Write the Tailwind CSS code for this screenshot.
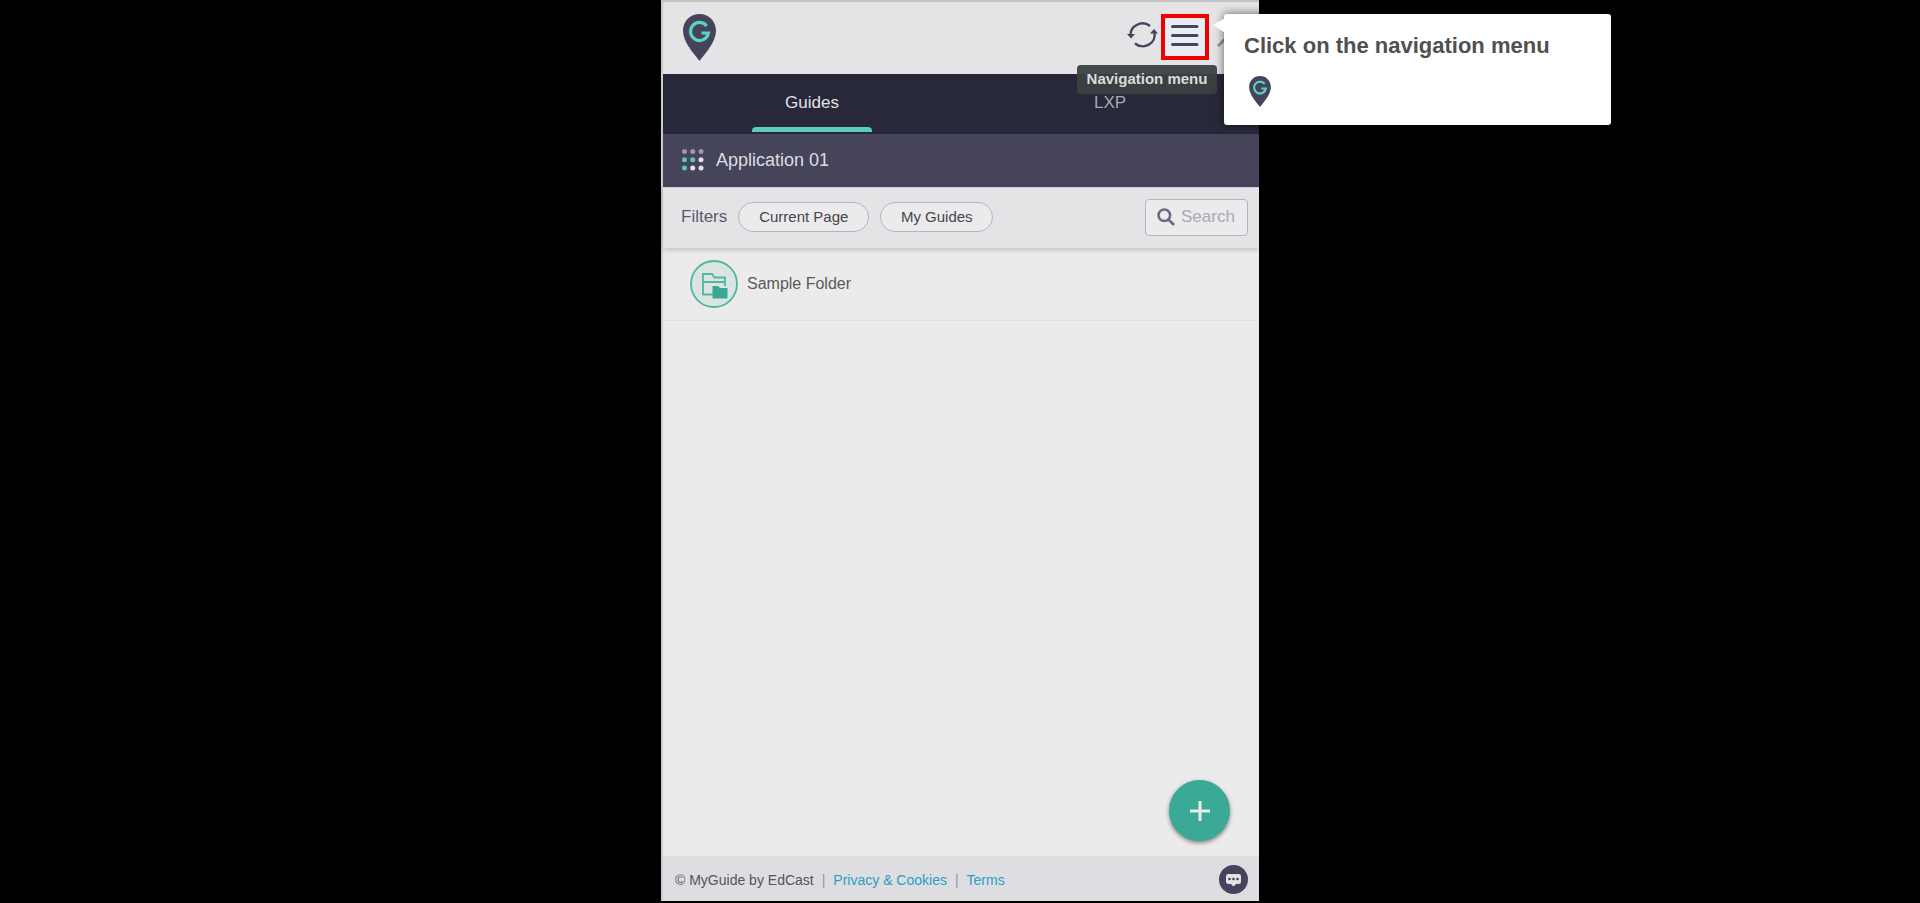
<!DOCTYPE html>
<html lang="en">
<head>
  <meta charset="UTF-8" />
  <meta name="viewport" content="width=device-width, initial-scale=1" />
  <title>MyGuide</title>
  <script src="https://cdn.jsdelivr.net/npm/@tailwindcss/browser@4"></script>
</head>
<body class="bg-black font-['Liberation_Sans',Arial,sans-serif]">

  <!-- Shared logo mark -->
  <svg class="hidden" aria-hidden="true">
    <symbol id="pin" viewBox="0 0 33 47">
      <path d="M16.500 0C7.200 0 0 7.300 0 16.600C0 27.500 9.600 38.400 16.500 47C23.400 38.400 33 27.500 33 16.600C33 7.300 25.800 0 16.500 0Z" fill="#45445c" />
      <path d="M23.600 11.900A9 9 0 1 0 25.400 19H18.500" fill="none" stroke="#5cd3bd" stroke-width="3.200" />
    </symbol>
  </svg>

  <div class="flex min-h-screen flex-col pb-0.5">
    <main class="mx-auto flex w-full max-w-[598px] grow flex-col border-l-2 border-[#cbcbcd] bg-[#ebebeb]">

      <!-- Header -->
      <header class="flex h-[74px] items-center bg-[#e4e4e6] pr-4 pl-5 shadow-[inset_0_2px_1px_#c2c2c4]">
        <svg class="h-[47px] w-[33px]" role="img" aria-label="MyGuide"><use href="#pin" /></svg>

        <div class="ml-auto flex items-center">
          <button type="button" aria-label="Refresh" class="mr-[3px]">
            <svg class="h-[30px] w-[31px]" viewBox="0 0 31 30" fill="none" stroke="#45445c" stroke-width="2.400">
              <path d="M3.500 13.500A12 11.500 0 0 1 23 4" />
              <path d="M27.500 10.500A12 11.500 0 0 1 8 21.500" />
              <path d="M0 12H8L4 16.500Z M23 11.500H31L27 7Z" fill="#45445c" stroke="none" />
            </svg>
          </button>

          <div class="relative">
            <button type="button" aria-label="Navigation menu" class="flex h-[46px] w-12 items-center justify-center border-4 border-[#ee0000] bg-[#e9edf1]">
              <svg class="h-6 w-7" viewBox="0 0 28 24" stroke="#45445c" stroke-width="3" stroke-linecap="round">
                <path d="M1.500 1.500H26M1.500 10.500H26M1.500 19.500H26" />
              </svg>
            </button>

            <!-- Hover tooltip -->
            <div role="tooltip" class="absolute top-[51px] right-[-8px] flex h-[29px] w-[140px] items-center justify-center rounded bg-[#3c4042]/95 text-[15px] font-bold whitespace-nowrap text-[#dcdcdc]">Navigation menu</div>

            <!-- Guide step balloon -->
            <section class="absolute top-0 left-[63px] z-10 h-[111px] w-[387px] rounded-[3px] bg-white px-5 pt-4 shadow-[0_0_10px_rgba(0,0,0,0.6)]">
              <svg class="absolute top-1 -left-[11px] h-[15px] w-3" viewBox="0 0 12 15"><path d="M12 0L0 7L12 15Z" fill="#fff" /></svg>
              <h1 class="text-[22px] leading-8 font-bold whitespace-nowrap text-[#505050]">Click on the navigation menu</h1>
              <svg class="mt-[14px] ml-[5px] h-[31px] w-[22px]" aria-hidden="true"><use href="#pin" /></svg>
            </section>
          </div>

          <button type="button" aria-label="Close" class="ml-2">
            <svg class="size-[26px]" viewBox="0 0 26 26" stroke="#8f8f93" stroke-width="2.500"><path d="M1 22L22 1M1 1L22 22" /></svg>
          </button>
        </div>
      </header>

      <!-- Tabs -->
      <nav class="grid h-15 grid-cols-2 bg-[#272839] text-[17px]">
        <button type="button" class="flex flex-col items-center text-[#e2e2e4]">
          <span class="flex h-[53px] items-center pt-1">Guides</span>
          <span class="h-[5px] w-[120px] rounded-t bg-[#5ccdb9]"></span>
        </button>
        <button type="button" class="flex flex-col items-center text-[#a9a9b1]">
          <span class="flex h-[53px] items-center pt-1">LXP</span>
        </button>
      </nav>

      <!-- Current application -->
      <div class="flex h-[53px] items-center gap-3 bg-[#45445b] px-[19px] pb-0.5">
        <svg class="size-[22px]" viewBox="0 0 22 22" aria-hidden="true">
          <g fill="#9a99aa"><circle cx="2.500" cy="2.500" r="2.500" /><circle cx="10.700" cy="2.500" r="2.500" /><circle cx="19" cy="2.500" r="2.500" /></g>
          <g fill="#5cc9b6"><circle cx="2.500" cy="10.700" r="2.500" /><circle cx="10.700" cy="10.700" r="2.500" /><circle cx="2.500" cy="19" r="2.500" /></g>
          <g fill="#e2e2e6"><circle cx="19" cy="10.700" r="2.500" /><circle cx="10.700" cy="19" r="2.500" /><circle cx="19" cy="19" r="2.500" /></g>
        </svg>
        <h2 class="text-lg text-[#dddde2]">Application 01</h2>
      </div>

      <!-- Filters -->
      <div class="relative flex h-[61px] items-center gap-[11px] border-t border-[#cfcfda] bg-[#e4e4e7] pr-[11px] pb-0.5 pl-[18px] shadow-[0_2px_5px_rgba(0,0,0,0.18)]">
        <span class="text-[17px] text-[#5b5a70]">Filters</span>
        <button type="button" class="h-[30px] w-[131px] rounded-full border border-[#b5b3c6] bg-[#ebebeb] text-[15px] text-[#45454f]">Current Page</button>
        <button type="button" class="h-[30px] w-[113px] rounded-full border border-[#b5b3c6] bg-[#ebebeb] text-[15px] text-[#45454f]">My Guides</button>
        <label class="ml-auto flex h-[37px] w-[103px] items-center gap-1.5 rounded border border-[#b5b3c6] bg-[#ebebeb] pl-[11px]">
          <svg class="size-[18px] shrink-0" viewBox="0 0 18 18" fill="none" stroke="#6a6980" stroke-width="2.500" aria-hidden="true">
            <circle cx="7.300" cy="7.300" r="5.800" /><path d="M11.500 11.500L17 17" />
          </svg>
          <input type="text" aria-label="Search" placeholder="Search" class="w-full min-w-0 text-[17px] outline-none placeholder:text-[#a9a8ba]" />
        </label>
      </div>

      <!-- Folder list -->
      <ul>
        <li class="flex h-[73px] items-center gap-[9px] border-b border-[#e1e1e1] pl-[27px]">
          <svg class="size-12" viewBox="0 0 48 48" fill="none" stroke="#50b5a1" stroke-width="1.800" aria-hidden="true">
            <circle cx="24" cy="24" r="23" fill="#dae5e2" />
            <path d="M24 34.500H13V14H22L24.500 17.500H35V26M13 22H35" />
            <path d="M22.500 26H28L30 28H37.500V38.500H22.500Z" fill="#38a893" stroke="none" />
          </svg>
          <span class="text-base text-[#5a5a5a]">Sample Folder</span>
        </li>
      </ul>

      <!-- Add button and footer -->
      <div class="mt-auto flex justify-end pr-[29px] pb-[15px]">
        <button type="button" aria-label="Add guide" class="flex size-[61px] items-center justify-center rounded-full bg-[#3aa995] shadow-[0_2px_4px_rgba(0,0,0,0.45)]">
          <svg class="size-5" viewBox="0 0 20 20" stroke="#e3f0ed" stroke-width="3"><path d="M10 0V20M0 10H20" /></svg>
        </button>
      </div>
      <footer class="flex h-[45px] items-center gap-2 bg-[#dddde2] pt-0.5 pr-[11px] pl-3 text-sm text-[#55545f]">
        <span>© MyGuide by EdCast</span>
        <span class="text-[#96959f]">|</span>
        <a href="#" class="text-[#2b9fc4]">Privacy &amp; Cookies</a>
        <span class="text-[#96959f]">|</span>
        <a href="#" class="text-[#2b9fc4]">Terms</a>
        <button type="button" aria-label="Chat" class="ml-auto">
          <svg class="size-[29px]" viewBox="0 0 29 29">
            <circle cx="14.500" cy="14.500" r="14.500" fill="#45445c" />
            <path d="M9.500 9H19.500Q22 9 22 11.500V16.500Q22 19 19.500 19H17L14.500 21.500L12 19H9.500Q7 19 7 16.500V11.500Q7 9 9.500 9Z" fill="#e4e4e7" />
            <g fill="#45445c"><circle cx="10.500" cy="14" r="1.300" /><circle cx="14.500" cy="14" r="1.300" /><circle cx="18.500" cy="14" r="1.300" /></g>
          </svg>
        </button>
      </footer>
    </main>
  </div>

</body>
</html>
